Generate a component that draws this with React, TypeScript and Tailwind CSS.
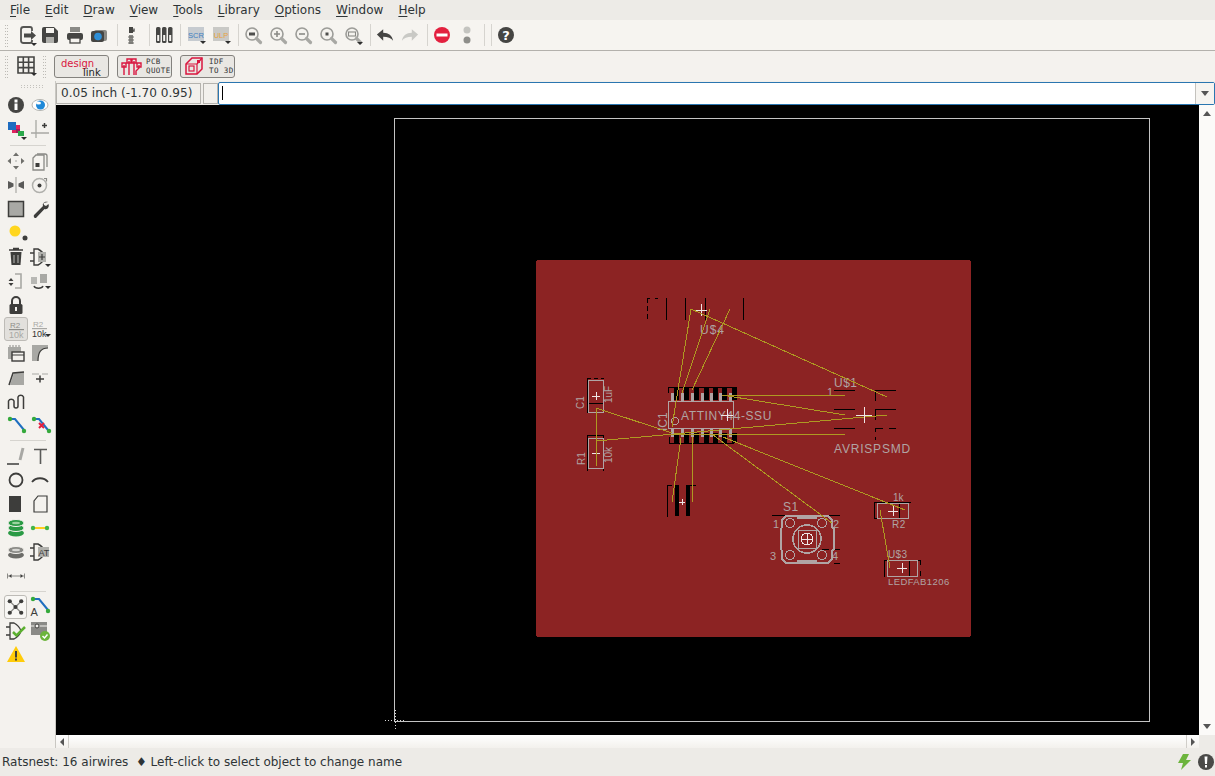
import type { ReactNode } from 'react'

const dark = '#3d3d3b'
const mid = '#8a8a86'

function Ico({ children, className = '' }: { children?: ReactNode; className?: string }) {
  return (
    <svg viewBox="0 0 24 24" className={`w-6 h-6 shrink-0 ${className}`}>
      {children}
    </svg>
  )
}

const Caret = ({ x = 17, y = 20 }: { x?: number; y?: number }) => (
  <path d={`M${x} ${y}h6l-3 3z`} fill="#2e2e2e" />
)

function Magnifier({ children, caret, className = '' }: { children?: ReactNode; caret?: boolean; className?: string }) {
  return (
    <Ico className={className}>
      <circle cx="11" cy="11" r="6" fill="#f5f3ef" stroke="#9c9c98" strokeWidth="1.600" />
      <path d="M15.500 15.500l4 4" stroke="#a8a8a4" strokeWidth="3.200" strokeLinecap="round" />
      {children}
      {caret && <Caret x={16} y={19} />}
    </Ico>
  )
}

function Grip({ className = '' }: { className?: string }) {
  return (
    <div className={`w-[4px] h-[20px] shrink-0 grid grid-cols-2 gap-y-[2px] content-start ${className}`}>
      {Array.from({ length: 16 }).map((_, i) => (
        <span key={i} className="w-px h-px bg-[#bdbbb6]" />
      ))}
    </div>
  )
}

const Sep = ({ className = '' }: { className?: string }) => (
  <div className={`w-px h-[22px] bg-[#d6d4cf] shrink-0 ${className}`} />
)

function TopToolbar() {
  return (
    <div className="h-[31px] bg-[#f6f4f0] border-b border-[#b3b1ac] flex items-center pl-[5px]">
      <Grip className="mr-[6px]" />
      <Ico>
        <path d="M6 8V6.500A2.500 2.500 0 0 1 8.500 4H15a2 2 0 0 1 2 2v2M17 17v1a2 2 0 0 1-2 2H8.500A2.500 2.500 0 0 1 6 17.500V8" fill="none" stroke="#555553" strokeWidth="1.800" />
        <path d="M9 10.500h7V8l5 4.500-5 4.500v-2.500H9z" fill="#4a4a48" />
        <Caret x={16} y={20} />
      </Ico>
      <Ico className="-ml-px mr-px">
        <path d="M4 6a2 2 0 0 1 2-2h10l4 4v10a2 2 0 0 1-2 2H6a2 2 0 0 1-2-2z" fill="#454543" />
        <rect x="8" y="5" width="8" height="5" fill="#f6f4f0" />
        <rect x="8" y="14" width="8" height="6" fill="#b0b0ac" />
      </Ico>
      <Ico>
        <rect x="7" y="4" width="10" height="5" fill={mid} />
        <rect x="4" y="10" width="16" height="7" rx="2" fill="#454543" />
        <rect x="7" y="15" width="10" height="5" fill="#f6f4f0" stroke="#454543" strokeWidth="1.300" />
      </Ico>
      <Ico>
        <rect x="7" y="7" width="13" height="11" rx="2" fill={mid} />
        <rect x="4" y="8" width="13" height="11" rx="2" fill="#454543" />
        <circle cx="11" cy="13.500" r="3.800" fill="#2e8fd8" />
      </Ico>
      <Sep className="ml-[6px] mr-px" />
      <Ico>
        <rect x="10" y="4" width="4" height="6" fill="#454543" />
        <path d="M12 8h3V5.500" fill="none" stroke="#454543" strokeWidth="1.300" />
        <rect x="10" y="12" width="4" height="9" fill={mid} />
        <path d="M9 14h6M9 17h6M9 20h6" stroke="#6c6c68" />
      </Ico>
      <Sep className="ml-[6px] mr-[2px]" />
      <Ico>
        {[4, 10, 16].map((x) => (
          <g key={x}>
            <rect x={x} y="4" width="4.500" height="16" rx="1.500" fill="#454543" />
            <rect x={x + 1.200} y="12" width="2" height="6" fill="#f6f4f0" />
          </g>
        ))}
      </Ico>
      <Sep className="ml-[4px] mr-[3px]" />
      <Ico>
        <rect x="4" y="4" width="16" height="14" fill="#c6cbd0" />
        <text x="12" y="14.500" textAnchor="middle" fontSize="7.500" fontFamily="Liberation Sans, sans-serif" fill="#3f7fc0">SCR</text>
        <Caret x={16} y={18} />
      </Ico>
      <Ico className="ml-px">
        <rect x="4" y="4" width="16" height="14" fill="#c9c9c6" />
        <text x="12" y="14.500" textAnchor="middle" fontSize="7.500" fontFamily="Liberation Sans, sans-serif" fill="#e8a33d">ULP</text>
        <Caret x={16} y={18} />
      </Ico>
      <Sep className="ml-[5px] mr-[2px]" />
      <Magnifier>
        <rect x="8" y="9.500" width="6" height="3" fill="#4f4f4d" />
      </Magnifier>
      <Magnifier className="ml-px">
        <path d="M8 11h6M11 8v6" stroke={mid} strokeWidth="1.600" />
      </Magnifier>
      <Magnifier className="ml-px">
        <path d="M8 11h6" stroke={mid} strokeWidth="1.600" />
      </Magnifier>
      <Magnifier className="ml-px">
        <rect x="9.500" y="9.500" width="3" height="3" fill="#4f4f4d" />
      </Magnifier>
      <Magnifier caret className="ml-px">
        <rect x="7.500" y="9" width="7" height="4" fill="none" stroke={mid} strokeWidth="1.100" />
      </Magnifier>
      <Sep className="ml-[5px] mr-[2px]" />
      <Ico>
        <path transform="translate(1.200 2.550) scale(.9)" d="M3 10l7-6v4c6 0 10 3 11 9-2-3-6-4.500-11-4.500V17z" fill="#454543" />
      </Ico>
      <Ico className="ml-px">
        <path transform="translate(1.200 2.550) scale(.9)" d="M21 10l-7-6v4c-6 0-10 3-11 9 2-3 6-4.500 11-4.500V17z" fill="#c9c9c5" />
      </Ico>
      <Sep className="ml-[5px] mr-[2px]" />
      <Ico>
        <circle cx="12" cy="12" r="8" fill="#e3203f" />
        <rect x="6.500" y="10.500" width="11" height="3" fill="#fff" />
      </Ico>
      <Ico className="ml-px">
        <circle cx="12" cy="7" r="3.500" fill="#c4c4c0" />
        <circle cx="12" cy="17" r="3.500" fill="#8e8e8a" />
      </Ico>
      <Sep className="ml-[5px] mr-[6px]" />
      <Sep className="mr-[2px]" />
      <Ico>
        <circle cx="12" cy="12" r="8" fill="#454543" />
        <text x="12" y="16.500" textAnchor="middle" fontSize="13" fontWeight="700" fontFamily="DejaVu Sans, sans-serif" fill="#fff">?</text>
      </Ico>
    </div>
  )
}

function LinkButton({ children, className = '' }: { children: ReactNode; className?: string }) {
  return (
    <div className={`w-[55px] h-[23px] rounded-[3px] border border-[#84827e] bg-[#e9e7e3] flex items-center shrink-0 ${className}`}>
      {children}
    </div>
  )
}

function SecondToolbar() {
  return (
    <div className="h-[30px] bg-[#f4f2ee] flex items-center pl-[5px]">
      <Grip className="mr-[7px]" />
      <Ico className="-ml-[1px]">
        <path d="M3 3h16v16H3zM3 8.300h16M3 13.600h16M8.300 3v16M13.600 3v16" fill="none" stroke="#454543" strokeWidth="1.600" />
        <Caret x={16} y={19} />
      </Ico>
      <Grip className="ml-[4px] mr-[7px]" />
      <LinkButton>
        <div className="relative w-full h-full font-['DejaVu_Sans',sans-serif]">
          <span className="absolute left-[6px] top-[3px] text-[10px] leading-[9px] text-[#d9163f]">design</span>
          <span className="absolute left-[28px] top-[12px] text-[10px] leading-[9px] text-[#222]">link</span>
        </div>
      </LinkButton>
      <LinkButton className="ml-[8px]">
        <svg viewBox="0 0 22 20" className="w-[22px] h-[20px] ml-[3px] shrink-0">
          <path d="M3 9v10M8 5v14M13 5v14M18 9v3l-3 3v4M1 7h4v4H1zM6 3h4v4H6zM11 3h4v4h-4zM16 7h4v4h-4z" fill="none" stroke="#d9163f" strokeWidth="1.400" />
        </svg>
        <div className="ml-[3px] font-['DejaVu_Sans_Mono',monospace] text-[7.500px] leading-[9px] text-[#333] tracking-[0.4px]">
          PCB
          <br />
          QUOTE
        </div>
      </LinkButton>
      <LinkButton className="ml-[8px]">
        <svg viewBox="0 0 20 20" className="w-5 h-5 ml-[3px] shrink-0">
          <path d="M2 8l6-6h10v11l-5 5H2z" fill="none" stroke="#d9163f" strokeWidth="1.500" />
          <path d="M2 8h11v10M13 8l5-6" fill="none" stroke="#d9163f" strokeWidth="1.200" />
          <rect x="5" y="10" width="5" height="5" fill="none" stroke="#d9163f" strokeWidth="1.200" />
          <rect x="13" y="4" width="3" height="3" fill="#d9163f" />
        </svg>
        <div className="ml-[5px] font-['DejaVu_Sans_Mono',monospace] text-[7.500px] leading-[9px] text-[#333] tracking-[0.4px]">
          IDF
          <br />
          TO 3D
        </div>
      </LinkButton>
    </div>
  )
}

const sideFont = 'Liberation Sans, sans-serif'

const NameIcon = ({ value }: { value?: boolean }) => (
  <Ico>
    <text x="5" y="9.500" fontSize="8" fontFamily={sideFont} fill={value ? '#a8a8a4' : '#8e8e8a'}>R2</text>
    <rect x="4" y="11" width="15" height="1.200" fill={value ? '#a8a8a4' : '#8e8e8a'} />
    <text x="4" y="20" fontSize="9" fontFamily={sideFont} fill={value ? '#333' : '#a8a8a4'}>10k</text>
    {value && <Caret x={17} y={17} />}
  </Ico>
)

const Plug = ({ children }: { children?: ReactNode }) => (
  <Ico>
    <path d="M2 8h4M2 16h4M6 4v16l4 0c4-2 6-5 7-8-1-3-3-6-7-8z" fill="none" stroke={dark} strokeWidth="1.400" />
    {children}
  </Ico>
)

const Spot = ({ cx, cy, c = '#35a93b' }: { cx: number; cy: number; c?: string }) => <circle cx={cx} cy={cy} r="2.200" fill={c} />

function SideRow({ a, b, className = '' }: { a?: ReactNode; b?: ReactNode; className?: string }) {
  return (
    <div className={`flex h-6 ${className}`}>
      <div className="w-6 h-6">{a}</div>
      <div className="w-6 h-6">{b}</div>
    </div>
  )
}

const SideRule = ({ className = '' }: { className?: string }) => <div className={`h-px w-[36px] ml-[6px] bg-[#d6d4cf] ${className}`} />

function Sidebar() {
  return (
    <div className="w-[56px] shrink-0 bg-[#f4f2ee] border-r border-[#c9c7c2] pl-[4px] flex flex-col">
      <div className="h-[12px] flex items-start pt-[4px] pl-[17px] gap-[2px]">
        {Array.from({ length: 8 }).map((_, i) => (
          <span key={i} className="w-px h-[3px] border-y border-[#c4c2bd]" />
        ))}
      </div>
      <SideRow
        a={
          <Ico>
            <circle cx="12" cy="12" r="8" fill="#454543" />
            <rect x="10.500" y="10.500" width="3" height="6.500" fill="#fff" />
            <rect x="10.500" y="6.500" width="3" height="3" fill="#fff" />
          </Ico>
        }
        b={
          <Ico>
            <ellipse cx="12" cy="12" rx="8" ry="5.500" fill="#fff" stroke="#b4b4b0" />
            <circle cx="12.500" cy="12" r="4.500" fill="#1e88d8" />
            <ellipse cx="10.500" cy="10" rx="2.500" ry="1.500" fill="#fff" />
          </Ico>
        }
      />
      <SideRow
        a={
          <Ico>
            <rect x="8" y="8" width="8" height="8" fill="#e0245e" />
            <rect x="8" y="8" width="4" height="4" fill="#fff" />
            <rect x="4" y="5" width="8" height="8" fill="#1e6cc0" />
            <rect x="12" y="12" width="4" height="4" fill="#a11f5a" />
            <rect x="14" y="14" width="6" height="5" fill="#2aa84a" />
            <Caret x={17} y={20} />
          </Ico>
        }
        b={
          <Ico>
            <path d="M8 3v18M3 16h18" stroke="#a8a8a4" strokeWidth="1.300" />
            <path d="M14 8.500h5M16.500 6v5" stroke={dark} strokeWidth="1.500" />
          </Ico>
        }
      />
      <div className="h-[8px] flex items-center">
        <SideRule />
      </div>
      <SideRow
        a={
          <Ico>
            <path d="M12 3.500l3 3.500h-6zM12 20.500l3-3.500h-6zM3.500 12l3.500-3v6zM20.500 12l-3.500-3v6z" fill="#6f6f6b" />
            <circle cx="12" cy="12" r="1" fill="#c0c0bc" />
          </Ico>
        }
        b={
          <Ico>
            <path d="M9 5h8a2 2 0 0 1 2 2v11" fill="none" stroke={mid} strokeWidth="1.300" />
            <path d="M5 9l3-3h8v15H5z" fill="#f6f4f0" stroke={mid} strokeWidth="1.300" />
            <rect x="7.500" y="14" width="4" height="4" fill={dark} />
          </Ico>
        }
      />
      <SideRow
        a={
          <Ico>
            <path d="M4 8l5.500 2.500v3L4 16zM20 8l-5.500 2.500v3l5.500 2.500z" fill="#5a5a58" />
            <path d="M12 4v16" stroke="#a8a8a4" strokeWidth="1.200" />
          </Ico>
        }
        b={
          <Ico>
            <circle cx="11.500" cy="12.500" r="7" fill="none" stroke="#b0b0ac" strokeWidth="1.500" />
            <circle cx="11.500" cy="12.500" r="2" fill={dark} />
            <path d="M16 5.500l2.500 0 0 3" fill="none" stroke={mid} strokeWidth="1.200" />
          </Ico>
        }
      />
      <SideRow
        a={
          <Ico>
            <rect x="4.500" y="4.500" width="15" height="15" fill="#a9a9a5" stroke={dark} strokeWidth="1.500" />
          </Ico>
        }
        b={
          <Ico>
            <path d="M20 5c-3-1-6 1-5 4L6 18a2 2 0 0 0 2 3l8.500-9c3 1 5-2 4-5l-2.500 2-2-1-.5-2z" fill={dark} />
          </Ico>
        }
      />
      <SideRow
        a={
          <Ico>
            <circle cx="11" cy="10" r="5.500" fill="#ffd61f" />
            <circle cx="21" cy="17" r="2.500" fill={dark} />
          </Ico>
        }
      />
      <SideRow
        a={
          <Ico>
            <path d="M6.500 7h11l-1 13h-9z" fill={dark} />
            <path d="M5 5h14M9 3.500h6" stroke={dark} strokeWidth="1.500" />
            <path d="M10 10v8M14 10v8" stroke="#bcbcb8" />
          </Ico>
        }
        b={
          <Plug>
            <rect x="10" y="7" width="8" height="10" fill="#b0b0ac" />
            <path d="M11 12h6M14 9v6" stroke={dark} strokeWidth="1.200" />
            <Caret x={17} y={19} />
          </Plug>
        }
      />
      <SideRow
        a={
          <Ico>
            <path d="M7 9l2.500 3h-5zM7 17l2.500-3h-5z" fill={dark} />
            <path d="M11 5h6v14h-6" fill="none" stroke="#a8a8a4" strokeWidth="1.600" />
          </Ico>
        }
        b={
          <Ico>
            <rect x="3" y="8" width="6" height="7" fill="#b8b8b4" />
            <rect x="12" y="5" width="7" height="9" fill="#a8a8a4" />
            <path d="M6 17c1 3 8 3 9 0" fill="none" stroke={dark} strokeWidth="1.400" />
            <Caret x={17} y={17} />
          </Ico>
        }
      />
      <SideRow
        a={
          <Ico>
            <path d="M8 11V8a4 4 0 0 1 8 0v3" fill="none" stroke={dark} strokeWidth="2" />
            <rect x="5.500" y="11" width="13" height="10" rx="1.500" fill={dark} />
            <rect x="11" y="14" width="2" height="4" fill="#f4f2ee" />
          </Ico>
        }
      />
      <SideRow
        a={
          <div className="w-6 h-6 rounded-[3px] border border-[#bdbbb6] bg-[#e2e0dc]">
            <NameIcon />
          </div>
        }
        b={<NameIcon value />}
      />
      <SideRow
        a={
          <Ico>
            <rect x="4" y="6" width="13" height="12" fill="#a8a8a4" />
            <path d="M6 4v2M9 4v2M12 4v2M15 4v2" stroke={mid} />
            <rect x="8" y="11" width="12" height="9" fill="#f4f2ee" stroke={dark} strokeWidth="1.400" />
            <path d="M8 14h12" stroke={dark} />
          </Ico>
        }
        b={
          <Ico>
            <path d="M4 4h16v3c-7 0-10 4-10 13H4z" fill="#a8a8a4" />
            <path d="M10 20c0-9 3-13 10-13" fill="none" stroke={dark} strokeWidth="1.200" />
          </Ico>
        }
      />
      <SideRow
        a={
          <Ico>
            <path d="M10 8l10-1v13H6z" fill="#a8a8a4" />
            <path d="M5 20l4-12 11-1" fill="none" stroke={dark} strokeWidth="1.500" />
          </Ico>
        }
        b={
          <Ico>
            <path d="M4 9h7M14 9h6" stroke="#a8a8a4" strokeWidth="1.200" />
            <path d="M8 14h8M12 10.500v7" stroke={dark} strokeWidth="1.500" />
          </Ico>
        }
      />
      <SideRow
        a={
          <Ico>
            <path d="M4.500 20v-8a3 3 0 0 1 5.500 0v5a2 2 0 0 0 4 0V8a3 3 0 0 1 5.500 0v12" fill="none" stroke={dark} strokeWidth="1.500" />
          </Ico>
        }
      />
      <SideRow
        a={
          <Ico>
            <path d="M6 6h5l9 11" fill="none" stroke="#1f6fc0" strokeWidth="2" />
            <Spot cx={6} cy={6} />
            <Spot cx={20} cy={18} />
          </Ico>
        }
        b={
          <Ico>
            <path d="M6 6h5l9 11" fill="none" stroke="#1f6fc0" strokeWidth="2" />
            <Spot cx={6} cy={6} />
            <Spot cx={21} cy={18} />
            <path d="M11 10l5 5M16 10l-5 5" stroke="#e3203f" strokeWidth="2" />
          </Ico>
        }
      />
      <div className="h-[7px] flex items-center">
        <SideRule />
      </div>
      <SideRow
        a={
          <Ico>
            <path d="M3 20h12" stroke={dark} strokeWidth="1.500" />
            <path d="M19 4l-3 12" stroke="#a8a8a4" strokeWidth="3" />
          </Ico>
        }
        b={
          <Ico>
            <path d="M6 5.500h13M12.500 5.500V20" stroke="#5a5a58" strokeWidth="1.600" fill="none" />
          </Ico>
        }
      />
      <SideRow
        a={
          <Ico>
            <circle cx="12" cy="12" r="6.500" fill="none" stroke={dark} strokeWidth="1.800" />
          </Ico>
        }
        b={
          <Ico>
            <path d="M4 14c4-5 12-5 16 0" fill="none" stroke={dark} strokeWidth="1.800" />
          </Ico>
        }
      />
      <SideRow
        a={
          <Ico>
            <rect x="5" y="4" width="12" height="16" fill={dark} />
          </Ico>
        }
        b={
          <Ico>
            <path d="M10 4h9v16H6V9z" fill="#f4f2ee" stroke={dark} strokeWidth="1.200" />
          </Ico>
        }
      />
      <SideRow
        a={
          <Ico>
            <ellipse cx="12" cy="17" rx="8" ry="3.500" fill="#2a9a45" />
            <ellipse cx="12" cy="12" rx="8" ry="3.500" fill="#2a9a45" stroke="#f4f2ee" />
            <ellipse cx="12" cy="7" rx="8" ry="3.500" fill="#2a9a45" stroke="#f4f2ee" />
            <ellipse cx="12" cy="7" rx="4" ry="1.200" fill="#9ad39f" />
          </Ico>
        }
        b={
          <Ico>
            <path d="M5 12h14" stroke="#ffcc1f" strokeWidth="2" />
            <Spot cx={5} cy={12} c="#42b54a" />
            <Spot cx={19} cy={12} c="#42b54a" />
          </Ico>
        }
      />
      <SideRow
        a={
          <Ico>
            <ellipse cx="12" cy="15" rx="8" ry="3.500" fill="#6c6c68" />
            <ellipse cx="12" cy="10" rx="8" ry="3.500" fill="#8a8a86" stroke="#f4f2ee" />
            <ellipse cx="12" cy="10" rx="4" ry="1.200" fill="#d6d6d2" />
          </Ico>
        }
        b={
          <Plug>
            <rect x="10" y="7" width="11" height="10" fill="#b0b0ac" />
            <text x="10.500" y="15.500" fontSize="9" fontFamily={sideFont} fill={dark}>AT</text>
          </Plug>
        }
      />
      <SideRow
        a={
          <Ico>
            <path d="M4 12h16M3.500 9.500v5M20.500 9.500v5" stroke={mid} />
            <path d="M5 12l2.500-2v4zM19 12l-2.500-2v4z" fill={dark} />
          </Ico>
        }
      />
      <div className="h-[7px] flex items-center">
        <SideRule />
      </div>
      <SideRow
        a={
          <div className="w-[23px] h-6 rounded-[3px] border border-[#bdbbb6] bg-[#f8f7f4]">
            <svg viewBox="0 0 22 22" className="w-full h-full">
              <path d="M11 11L5 5M11 11L17 5M11 11L5 17M11 11L17 17" stroke={mid} strokeWidth="1.200" />
              {[[11, 11], [5, 5], [17, 5], [5, 17], [17, 17]].map(([x, y]) => (
                <circle key={`${x}-${y}`} cx={x} cy={y} r="2.200" fill={dark} />
              ))}
            </svg>
          </div>
        }
        b={
          <Ico>
            <path d="M5 4h6l9 11" fill="none" stroke="#1f6fc0" strokeWidth="2" />
            <Spot cx={5} cy={4} />
            <Spot cx={20} cy={16} />
            <text x="2.500" y="21" fontSize="11" fontFamily={sideFont} fill={dark}>A</text>
          </Ico>
        }
      />
      <SideRow
        a={
          <Ico>
            <path d="M2 8h4M2 16h4M6 4v16l4 0c4-2 6-5 7-8-1-3-3-6-7-8z" fill="none" stroke={dark} strokeWidth="1.300" />
            <path d="M9 13l3.500 3.500L21 8" fill="none" stroke="#5cb030" strokeWidth="2.500" />
          </Ico>
        }
        b={
          <Ico>
            <rect x="3" y="3" width="16" height="13" fill="#8a8a86" />
            <path d="M3 7h16" stroke="#f4f2ee" />
            <circle cx="9" cy="7" r="2" fill="#f4f2ee" stroke={dark} />
            <circle cx="17" cy="17" r="5" fill="#6cb43c" />
            <path d="M14.500 17l2 2 3-3.500" fill="none" stroke="#fff" strokeWidth="1.500" />
          </Ico>
        }
      />
      <SideRow
        a={
          <Ico>
            <path d="M12 3l9 16H3z" fill="#ffcc0a" />
            <rect x="11" y="8" width="2" height="6.500" fill={dark} />
            <rect x="11" y="15.500" width="2" height="2" fill={dark} />
          </Ico>
        }
      />
    </div>
  )
}

const silk = '#b0a4a4'
const air = '#ae9a22'
const bright = '#efe6e6'

function Cross({ x, y, s = 6 }: { x: number; y: number; s?: number }) {
  return <path d={`M${x - s} ${y}h${s * 2}M${x} ${y - s}v${s * 2}`} stroke={bright} />
}

function Label({
  x,
  y,
  size = 11,
  rotate,
  spacing = 0,
  children,
}: {
  x: number
  y: number
  size?: number
  rotate?: boolean
  spacing?: number
  children: string
}) {
  return (
    <text
      x={x}
      y={y}
      fontSize={size}
      letterSpacing={spacing}
      fill={silk}
      fontFamily="Liberation Sans, sans-serif"
      transform={rotate ? `rotate(-90 ${x} ${y})` : undefined}
    >
      {children}
    </text>
  )
}

const wires = [
  [691, 309, 672, 427],
  [710, 309, 682, 393],
  [730, 309, 692, 390],
  [691, 309, 887, 397],
  [722, 395, 845, 395],
  [722, 395, 845, 415],
  [596, 441, 887, 415],
  [672, 434, 845, 434],
  [596, 408, 672, 433],
  [596, 408, 596, 466],
  [681, 438, 672, 502],
  [692, 437, 692, 502],
  [713, 435, 832, 523],
  [723, 437, 905, 510],
  [880, 510, 890, 568],
]

const pins = [672, 682, 692, 702, 711, 720, 730]

function Board() {
  return (
    <svg viewBox="56 105 1143 630" className="block w-full h-full" shapeRendering="crispEdges">
      <rect x="394.500" y="118.500" width="755" height="603" fill="none" stroke="#c4c4c4" />
      <path d="M385 720.500h20M395.500 710v20" stroke="#d8d8d8" strokeDasharray="1 2" />
      <rect x="536" y="260" width="435" height="377" rx="3" fill="#8c2323" />

      {/* U$4 header, top */}
      <path d="M647.500 298v5M647.500 306v5M647.500 314v5M647 298h3M655 298h3M666.500 298v22M685.500 298v22M705.500 298v22M743.500 298v22" stroke="#000" />
      <Label x={700} y={334} size={12} spacing={1}>U$4</Label>
      <Cross x={701} y={310} />

      {/* C1 */}
      <path d="M587.500 378v35M587 378.500h4M594 378.500h4M601 378.500h3M587 403.500h17" stroke="#000" />
      <rect x="588.500" y="380.500" width="15" height="32" fill="none" stroke={silk} />
      <Cross x={596} y={396} s={4} />
      <Label x={584} y={409} size={10} rotate>C1</Label>
      <Label x={612} y={403} size={10} rotate>1uF</Label>

      {/* R1 */}
      <path d="M587.500 435v36M603.500 435v36M587 435.500h17" stroke="#000" />
      <rect x="588.500" y="438.500" width="15" height="30" fill="none" stroke={silk} />
      <Cross x={596} y={453} s={4} />
      <Label x={585} y={465} size={10} rotate>R1</Label>
      <Label x={612} y={463} size={10} rotate>10k</Label>

      {/* IC1 */}
      <path d="M668.500 387h65M668.500 443.500h65M668.500 387v6M733.500 387v13M669.500 437v6M733.500 437v6" stroke="#000" />
      {pins.map((x) => (
        <g key={x}>
          <rect x={x + 2} y="387" width="5" height="13" fill="#000" />
          <rect x={x + 2} y="433" width="5" height="10" fill="#000" />
          <rect x={x - 1} y="393" width="3" height="8" fill={silk} />
          <rect x={x - 1} y="428" width="3" height="9" fill={silk} />
        </g>
      ))}
      <rect x="668.500" y="401.500" width="65" height="27" fill="none" stroke={silk} strokeWidth="1.500" />
      <circle cx="675" cy="421" r="3.500" fill="none" stroke={silk} />
      <Label x={681} y={420} size={12} spacing={0.6}>ATTINY44-SSU</Label>
      <Label x={667} y={431} size={12} rotate>IC1</Label>
      <Cross x={727} y={415} s={6} />

      {/* lower header */}
      <path d="M667.500 485v32M667 485.500h5M686 485.500h10" stroke="#000" />
      <rect x="675" y="485" width="4" height="31" fill="#000" />
      <rect x="686" y="485" width="3.500" height="31" fill="#000" />
      <Cross x={682} y={502} s={3} />

      {/* U$1 */}
      <path d="M834 390.500h21M834 409.500h21M834 428.500h21M875 390.500h21M875 409.500h21M875 428.500h8M889 428.500h7M875.500 390v11M875.500 409v11M875.500 428v4M875.500 437v3" stroke="#000" />
      <Label x={834} y={387} size={12} spacing={0.5}>U$1</Label>
      <Label x={827} y={396} size={11}>1</Label>
      <Label x={834} y={453} size={12} spacing={0.8}>AVRISPSMD</Label>
      <Cross x={864} y={415} s={8} />

      {/* S1 */}
      <path d="M772 515.500h68M822 549.500h7M822 563.500h7M834 563.500h6M834 549.500h6" stroke="#000" />
      <path d="M786 516h42l4 4v7l2 2v20l-2 2v8l-4 4h-42l-4-4v-8l-1-2v-20l1-2v-7z" fill="none" stroke={silk} strokeWidth="1.500" />
      <path d="M797 518h20M797 561h20" stroke={silk} strokeWidth="1.500" />
      {[[790, 523], [822, 523], [790, 555], [822, 555]].map(([x, y]) => (
        <circle key={`${x}${y}`} cx={x} cy={y} r="4.500" fill="none" stroke={silk} strokeWidth="1.300" />
      ))}
      <circle cx="807" cy="539" r="14" fill="none" stroke={silk} strokeWidth="1.500" />
      <rect x="798" y="530" width="18" height="18" fill="none" stroke={silk} />
      <circle cx="807" cy="539" r="6" fill="none" stroke={bright} />
      <Cross x={807} y={539} s={6} />
      <Label x={783} y={511} size={12} spacing={0.5}>S1</Label>
      <Label x={773} y={528} size={11}>1</Label>
      <Label x={833} y={528} size={11}>2</Label>
      <Label x={770} y={560} size={11}>3</Label>
      <Label x={832} y={560} size={11}>4</Label>

      {/* R2 */}
      <path d="M874 502.500h37M874.500 502v17M874 518.500h7M899.500 502v16" stroke="#000" />
      <rect x="877.500" y="503.500" width="31" height="15" fill="none" stroke={silk} />
      <Cross x={893} y={511} s={5} />
      <Label x={893} y={501} size={10}>1k</Label>
      <Label x={892} y={528} size={10} spacing={0.5}>R2</Label>

      {/* U$3 */}
      <path d="M884.500 560v17M884 560.500h4M909 560.500h4M916 560.500h5M920.500 560v5M920.500 571v5M909.500 560v17" stroke="#000" />
      <rect x="887.500" y="560.500" width="30" height="16" fill="none" stroke={silk} />
      <Cross x={902} y={568} s={5} />
      <Label x={888} y={558} size={10} spacing={0.4}>U$3</Label>
      <Label x={888} y={585} size={9.500} spacing={0.4}>LEDFAB1206</Label>

      {wires.map(([x1, y1, x2, y2], i) => (
        <line key={i} x1={x1} y1={y1} x2={x2} y2={y2} stroke={air} />
      ))}
    </svg>
  )
}

const menus = ['File', 'Edit', 'Draw', 'View', 'Tools', 'Library', 'Options', 'Window', 'Help']

export default function App() {
  return (
    <div className="w-[1215px] h-[776px] flex flex-col overflow-hidden bg-[#edebe7] font-['DejaVu_Sans',sans-serif] text-[12px] text-[#2e3436]">
      <div className="h-[20px] flex items-center gap-[15px] pl-[10px] leading-none">
        {menus.map((m) => (
          <span key={m}>
            <u className="underline-offset-2">{m[0]}</u>
            {m.slice(1)}
          </span>
        ))}
      </div>
      <TopToolbar />
      <SecondToolbar />
      <div className="flex flex-1 min-h-0">
        <Sidebar />
        <div className="flex-1 min-w-0 flex flex-col">
          <div className="h-[24px] bg-[#f0eeea] flex items-center">
            <div className="w-[145px] h-[21px] border border-[#b5b3ae] bg-[#f2f0ec] flex items-center pl-[4px] pt-px text-[12.100px] whitespace-nowrap">
              0.05 inch (-1.70 0.95)
            </div>
            <div className="w-[15px] h-[21px] ml-[2px] border border-[#b5b3ae] bg-[#f2f0ec]" />
            <div className="flex-1 h-[23px] flex bg-white border border-[#2a76b0] rounded-[2px]">
              <div className="flex-1 flex items-center pl-[3px]">
                <span className="w-px h-[14px] bg-black" />
              </div>
              <div className="w-[19px] border-l border-[#c4c2bd] bg-[#f6f4f0] flex items-center justify-center">
                <span className="w-0 h-0 border-x-[4px] border-x-transparent border-t-[5px] border-t-[#555]" />
              </div>
            </div>
          </div>
          <div className="flex-1 min-h-0 flex">
            <div className="flex-1 min-w-0 bg-black">
              <Board />
            </div>
            <div className="w-[16px] bg-[#fbfaf8] flex flex-col items-center justify-between py-[6px]">
              <span className="w-0 h-0 border-x-[4px] border-x-transparent border-b-[5px] border-b-[#555]" />
              <span className="w-0 h-0 border-x-[4px] border-x-transparent border-t-[5px] border-t-[#555]" />
            </div>
          </div>
          <div className="h-[13px] flex">
            <div className="flex-1 flex justify-between bg-gradient-to-b from-white to-[#f3f1ed]">
              <div className="w-[13px] border-r border-[#d0cec9] flex items-center justify-center">
                <span className="w-0 h-0 border-y-[4px] border-y-transparent border-r-[4px] border-r-[#555]" />
              </div>
              <div className="w-[13px] border-l border-[#d0cec9] flex items-center justify-center">
                <span className="w-0 h-0 border-y-[4px] border-y-transparent border-l-[4px] border-l-[#555]" />
              </div>
            </div>
            <div className="w-[16px] bg-[#edebe7]" />
          </div>
        </div>
      </div>
      <div className="h-[28px] shrink-0 flex items-center pl-[2px] whitespace-pre">
        <span className="flex-1">Ratsnest: 16 airwires  ♦ Left-click to select object to change name</span>
        <svg viewBox="0 0 14 16" className="w-[14px] h-[16px] mr-[7px]">
          <path d="M6 0h6L9 6h5L4 16l2-7H1z" fill="#6cb43c" />
        </svg>
        <svg viewBox="0 0 16 16" className="w-4 h-4 mr-px">
          <circle cx="8" cy="8" r="8" fill="#4a4a48" />
          <path d="M6.500 2.500h3L9 10H7z" fill="#fff" />
          <rect x="7" y="11" width="2" height="2.500" fill="#fff" />
        </svg>
      </div>
    </div>
  )
}
